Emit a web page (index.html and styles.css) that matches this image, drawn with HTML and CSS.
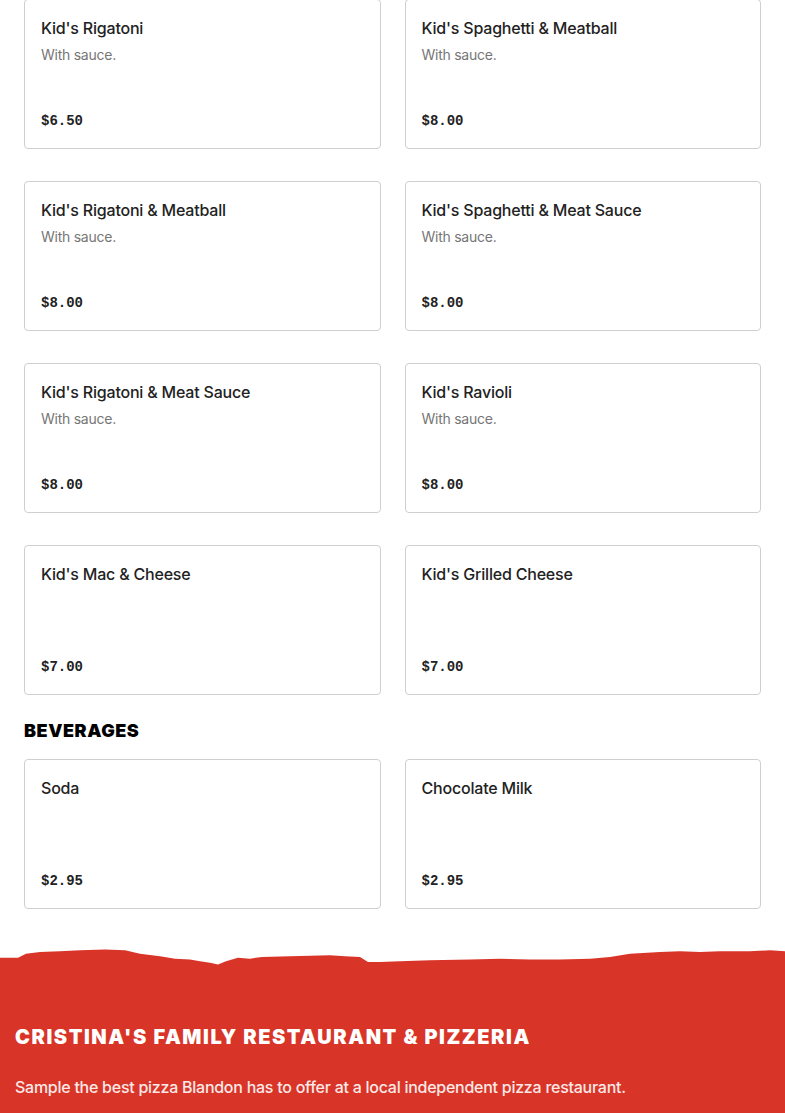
FILE: index.html
```html
<!DOCTYPE html>
<html lang="en">
<head>
<meta charset="utf-8">
<title>Menu</title>
<link rel="stylesheet" href="styles.css">
</head>
<body>
<main class="menu">
  <section class="grid">
    <div class="card"><div class="name">Kid's Rigatoni</div><div class="desc">With sauce.</div><div class="price">$6.50</div></div>
    <div class="card"><div class="name">Kid's Spaghetti &amp; Meatball</div><div class="desc">With sauce.</div><div class="price">$8.00</div></div>
    <div class="card"><div class="name">Kid's Rigatoni &amp; Meatball</div><div class="desc">With sauce.</div><div class="price">$8.00</div></div>
    <div class="card"><div class="name">Kid's Spaghetti &amp; Meat Sauce</div><div class="desc">With sauce.</div><div class="price">$8.00</div></div>
    <div class="card"><div class="name">Kid's Rigatoni &amp; Meat Sauce</div><div class="desc">With sauce.</div><div class="price">$8.00</div></div>
    <div class="card"><div class="name">Kid's Ravioli</div><div class="desc">With sauce.</div><div class="price">$8.00</div></div>
    <div class="card"><div class="name">Kid's Mac &amp; Cheese</div><div class="price">$7.00</div></div>
    <div class="card"><div class="name">Kid's Grilled Cheese</div><div class="price">$7.00</div></div>
  </section>
  <h2 class="section-title">BEVERAGES</h2>
  <section class="grid">
    <div class="card"><div class="name">Soda</div><div class="price">$2.95</div></div>
    <div class="card"><div class="name">Chocolate Milk</div><div class="price">$2.95</div></div>
  </section>
</main>
<footer class="footer">
  <svg class="torn" viewBox="0 0 785 30" preserveAspectRatio="none" aria-hidden="true">
    <path d="M0 13 L18 13 L26 8 L40 6 L60 5 L80 4 L105 3 L125 4 L140 8 L160 11 L175 14 L190 15 L200 17 L210 19 L218 21 L226 17 L238 13 L250 14 L262 12 L290 11 L330 10 L345 11 L360 12 L368 18 L380 18 L400 17 L430 16 L470 15 L500 14 L530 15 L560 15 L590 14 L610 12 L630 8 L660 6 L680 5 L700 6 L720 5 L750 5 L770 4 L785 5 L785 30 L0 30 Z" fill="#d93428"/>
  </svg>
  <div class="footer-body">
    <h2 class="footer-title">CRISTINA'S FAMILY RESTAURANT &amp; PIZZERIA</h2>
    <p class="footer-text">Sample the best pizza Blandon has to offer at a local independent pizza restaurant.</p>
  </div>
</footer>
</body>
</html>
```
FILE: styles.css
```css
* { box-sizing: border-box; }
html, body { margin: 0; padding: 0; background: #fff; }
body { font-family: "Inter", "Liberation Sans", sans-serif; color: #222; }

.menu {
  padding: 0 24px;
  margin-top: -1px;
}

.grid {
  display: grid;
  grid-template-columns: 1fr 1fr;
  column-gap: 24px;
  row-gap: 32px;
}

.card {
  height: 150px;
  border: 1px solid #cfcfcf;
  border-radius: 4px;
  padding: 16px 16px 16px;
  display: flex;
  flex-direction: column;
}

.name {
  font-size: 16px;
  line-height: 24px;
  font-weight: 500;
  color: #222;
  letter-spacing: -0.2px;
}

.desc {
  font-size: 14px;
  line-height: 22px;
  color: #767676;
  margin-top: 4px;
  letter-spacing: -0.25px;
}

.price {
  margin-top: auto;
  font-family: "Liberation Mono", "DejaVu Sans Mono", monospace;
  font-weight: 700;
  font-size: 14px;
  line-height: 22px;
  color: #222;
}

.section-title {
  margin: 25px 0 17px;
  font-family: "Inter", "Liberation Sans", sans-serif;
  font-weight: 900;
  font-size: 18px;
  line-height: 22px;
  color: #000;
  letter-spacing: 0.55px;
}

.footer {
  margin-top: 38px;
}

.torn {
  display: block;
  width: 100%;
  height: 25px;
}

.footer-body {
  background: #d93428;
  padding: 52px 15px 30px;
  margin-top: -1px;
}

.footer-title {
  margin: 0;
  font-family: "Inter", "Liberation Sans", sans-serif;
  font-weight: 900;
  font-size: 20px;
  line-height: 28px;
  color: #fff;
  letter-spacing: 1.55px;
}

.footer-text {
  margin: 24px 0 0;
  font-size: 16px;
  line-height: 24px;
  color: #fbe9e7;
  font-weight: 500;
  letter-spacing: -0.26px;
}
```
